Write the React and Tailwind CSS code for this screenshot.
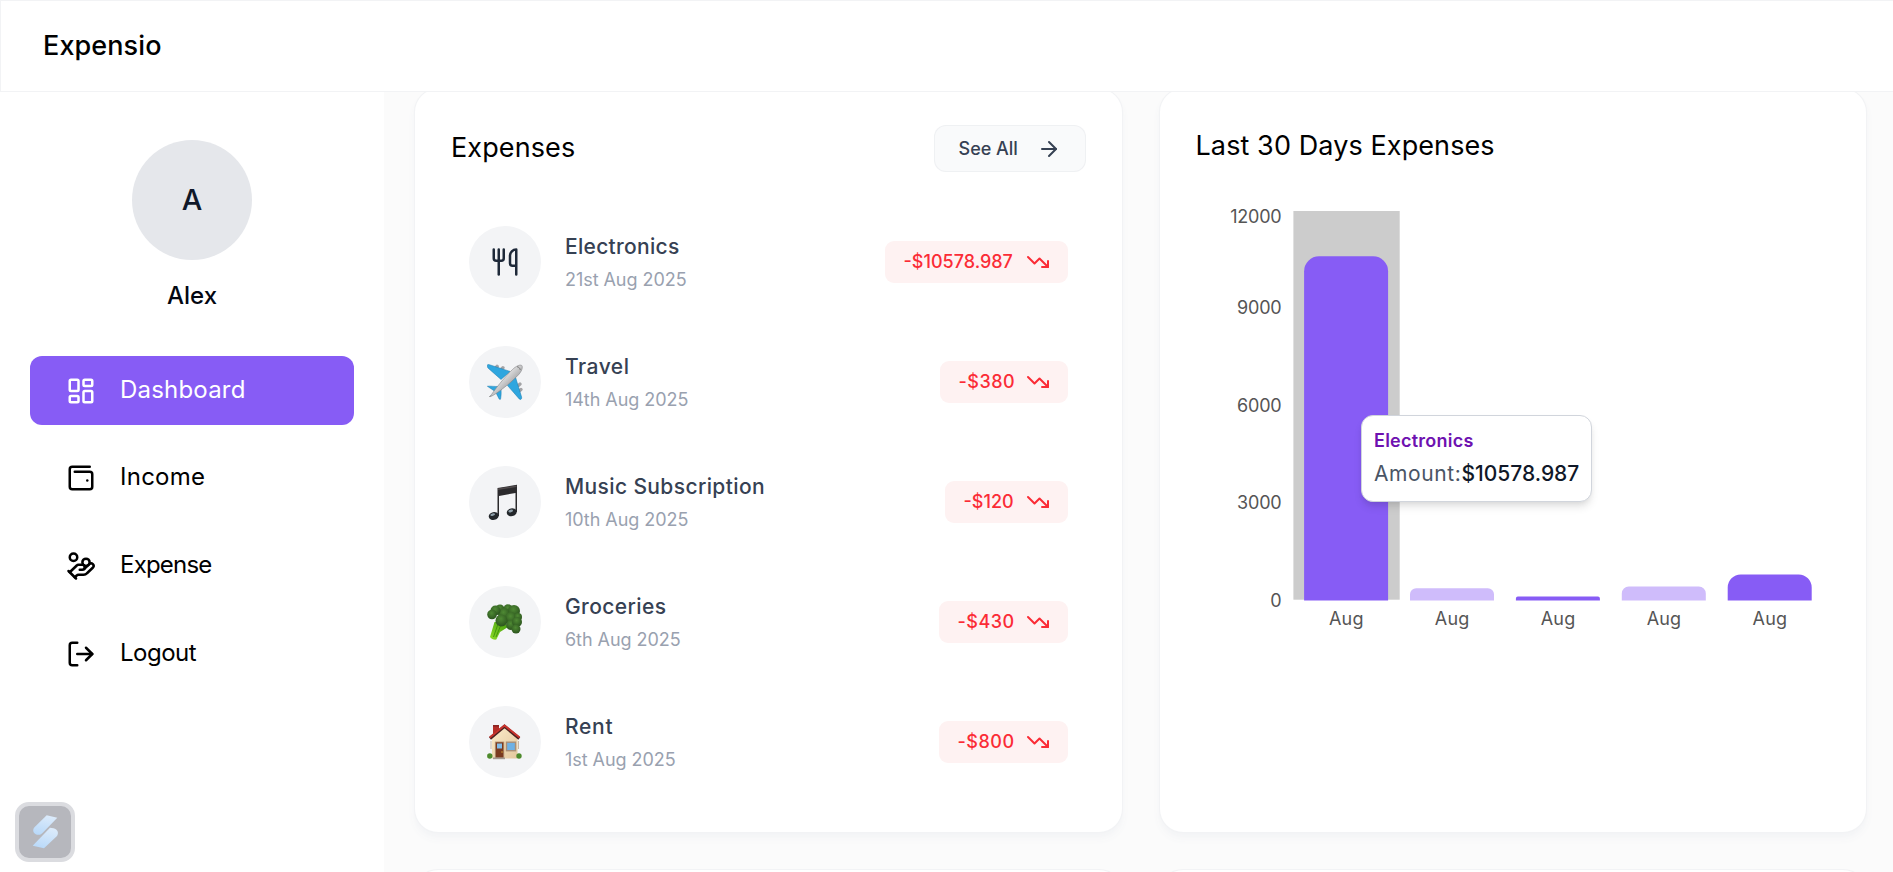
import React from "react";
import {
  LuLayoutDashboard,
  LuWalletMinimal,
  LuHandCoins,
  LuLogOut,
  LuArrowRight,
  LuTrendingDown,
  LuUtensils,
} from "react-icons/lu";

const MENU = [
  { label: "Dashboard", Icon: LuLayoutDashboard, active: true, track: "tracking-[0.2px]" },
  { label: "Income", Icon: LuWalletMinimal, track: "tracking-[0.25px]" },
  { label: "Expense", Icon: LuHandCoins, track: "tracking-[-0.8px]" },
  { label: "Logout", Icon: LuLogOut, track: "tracking-[-0.5px]" },
];

function Plane() {
  return (
    <svg viewBox="0 0 36 36" className="size-9">
      <defs>
        <linearGradient id="hull" x1="0" y1="0" x2="1" y2="1">
          <stop offset="0.3" stopColor="#f4f4f4" />
          <stop offset="0.75" stopColor="#8f8f92" />
        </linearGradient>
      </defs>
      <g fill="#a3a3a6">
        <rect x="8" y="0.8" width="3.6" height="5.5" rx="1.6" transform="rotate(40 10 3)" />
        <rect x="14" y="1.8" width="3.4" height="5.5" rx="1.6" transform="rotate(40 15.5 4)" />
        <rect x="29" y="19" width="5.4" height="3.4" rx="1.6" transform="rotate(-40 32 20)" />
        <rect x="30.5" y="24.5" width="5.2" height="3.4" rx="1.6" transform="rotate(-40 33 26)" />
      </g>
      <g fill="#2ea6df" stroke="#1778ad" strokeWidth="0.5" strokeLinejoin="round">
        <path d="M0.3 1.2C0.5.3 1.5.3 2.4.7L23 7.4 14 15.5 1.2 4.2C.4 3.4.1 2.2.3 1.2Z" />
        <path d="M28.3 12.5L34.6 33c.3 1.2-.3 2.6-1.4 2.4-.8-.1-1.2-.6-1.6-1.2L20.5 21.5Z" />
        <path d="M.4 22.3c2-.5 7 .3 11.6.2L8.5 27.7Z" />
        <path d="M8.6 28L14 24.5c.3 4 .2 7.5-.5 10.8l-1.2-.1Z" />
      </g>
      <path d="M2.5 32.8L3.6 31.5" stroke="#777" strokeWidth="1" />
      <path
        d="M3.2 32.7C6 27.5 19 11.5 25.5 5.5 29 2.2 32.5.5 34.5 1.3c1.6 1 .8 5-2.3 8.700C26.500 16.500 9.500 30.500 3.200 32.700Z"
        fill="url(#hull)"
        stroke="#858588"
        strokeWidth="0.6"
      />
      <path d="M30 2.7c1.8.2 3 1.500 3.300 3.300" fill="none" stroke="#777" strokeWidth="1" />
    </svg>
  );
}

function Note() {
  return (
    <svg viewBox="0 0 36 36" className="size-9">
      <path d="M10.5 4L30 .8V28h-1.500V9L12 12v20h-1.500Z" fill="#2b2a2d" />
      <path d="M11 4.400L29.500 1.400V3L11 6Z" fill="#514a4c" />
      <ellipse cx="6.7" cy="32" rx="5" ry="3.900" fill="#23272b" transform="rotate(-12 6.7 32)" />
      <ellipse cx="24.7" cy="28.3" rx="5" ry="3.900" fill="#23272b" transform="rotate(-12 24.7 28.3)" />
      <ellipse cx="5.7" cy="30.7" rx="2.4" ry="1.2" fill="#8fa0ab" transform="rotate(-15 5.7 30.7)" />
      <ellipse cx="23.7" cy="27" rx="2.4" ry="1.2" fill="#8fa0ab" transform="rotate(-15 23.7 27)" />
    </svg>
  );
}

function Broccoli() {
  return (
    <svg viewBox="0 0 36 36" className="size-9">
      <defs>
        <radialGradient id="floret" cx="0.45" cy="0.35" r="0.65">
          <stop offset="0" stopColor="#4f8a34" />
          <stop offset="1" stopColor="#2b541d" />
        </radialGradient>
        <linearGradient id="stalk" x1="0" y1="1" x2="1" y2="0">
          <stop offset="0" stopColor="#8fdc28" />
          <stop offset="1" stopColor="#3f9a0c" />
        </linearGradient>
      </defs>
      <path d="M7.5 18L3 33c1 1.8 4 3 6.3 2.6L13 28l8-5-6-6Z" fill="url(#stalk)" />
      <path d="M11 20L6.5 33M13.5 22L9 33" stroke="#378a0a" strokeWidth="0.8" />
      <g fill="url(#floret)">
        <circle cx="13" cy="5" r="4.5" />
        <circle cx="21" cy="4.8" r="4.5" />
        <circle cx="17" cy="10" r="6" />
        <circle cx="8.5" cy="6.5" r="5" />
        <circle cx="27" cy="7" r="6" />
        <circle cx="24" cy="14" r="6" />
        <circle cx="31" cy="13" r="4" />
        <circle cx="5" cy="10.5" r="4.8" />
        <circle cx="24" cy="21" r="5" />
        <circle cx="30" cy="18" r="5" />
        <circle cx="29" cy="25" r="4.5" />
        <circle cx="14.5" cy="16.5" r="6" />
      </g>
    </svg>
  );
}

function House() {
  return (
    <svg viewBox="0 0 36 36" className="size-9">
      <defs>
        <linearGradient id="wall" x1="0" y1="0" x2="1" y2="1">
          <stop offset="0" stopColor="#fbeccb" />
          <stop offset="1" stopColor="#e3c79d" />
        </linearGradient>
      </defs>
      <rect x="6" y="1.2" width="6" height="9" fill="#b52d27" />
      <rect x="6" y="1" width="6" height="1.6" fill="#8a2522" />
      <path d="M5 13L17.5 2.5 30.5 13v21.5H5Z" fill="url(#wall)" />
      <path d="M4 17v8M31.5 17v8" stroke="#c9b9a6" strokeWidth="1" />
      <path d="M3 14.5L17.5 2.3 32.3 14.5" fill="none" stroke="#4a2020" strokeWidth="3" />
      <path d="M2.7 13.5L17.5 1.5 32.6 13.5" fill="none" stroke="#c9332d" strokeWidth="2" />
      <rect x="8.3" y="18" width="8.5" height="16" fill="#7a3a1f" stroke="#b08f6f" strokeWidth="0.8" />
      <rect x="10" y="19.5" width="5" height="5" fill="#82bdea" />
      <circle cx="15" cy="28" r="0.7" fill="#e2b33c" />
      <rect x="19.5" y="18.2" width="9" height="8.5" fill="#6fb1e4" stroke="#a98f78" strokeWidth="1.4" />
      <rect x="6" y="33.5" width="12" height="1.7" fill="#a39a90" />
      <circle cx="2.8" cy="32" r="2.7" fill="#4d8a2c" />
      <circle cx="32" cy="32" r="2.7" fill="#4d8a2c" />
    </svg>
  );
}

const EXPENSES = [
  { name: "Electronics", date: "21st Aug 2025", amount: "-$10578.987", width: "w-[183px]", amountTrack: "tracking-normal", nameTrack: "tracking-[0.3px]", icon: <LuUtensils className="size-[30px] text-gray-800" /> },
  { name: "Travel", date: "14th Aug 2025", amount: "-$380", width: "w-32", amountTrack: "tracking-[0.5px]", nameTrack: "tracking-[0.5px]", icon: <Plane /> },
  { name: "Music Subscription", date: "10th Aug 2025", amount: "-$120", width: "w-[123px]", amountTrack: "tracking-normal", nameTrack: "tracking-[0.38px]", icon: <Note /> },
  { name: "Groceries", date: "6th Aug 2025", amount: "-$430", width: "w-[129px]", amountTrack: "tracking-[0.5px]", nameTrack: "tracking-[0.4px]", icon: <Broccoli /> },
  { name: "Rent", date: "1st Aug 2025", amount: "-$800", width: "w-[129px]", amountTrack: "tracking-[0.5px]", nameTrack: "tracking-[0.7px]", icon: <House /> },
];

function ExpenseRow({ item }) {
  return (
    <div className="flex items-center gap-6 p-[18px]">
      <div className="flex size-[72px] items-center justify-center rounded-full bg-gray-100">{item.icon}</div>
      <div className="flex flex-1 items-center justify-between">
        <div className="pt-px">
          <p className={`text-[21px] leading-[33px] font-medium text-gray-700 ${item.nameTrack}`}>{item.name}</p>
          <p className="text-lg leading-[33px] tracking-[-0.05px] text-gray-400">{item.date}</p>
        </div>
        <div className={`flex h-[42px] items-center justify-between rounded-[9px] bg-red-50 pr-[18px] pl-[19px] text-red-500 ${item.width}`}>
          <span className={`text-lg font-medium ${item.amountTrack}`}>{item.amount}</span>
          <LuTrendingDown className="size-6" />
        </div>
      </div>
    </div>
  );
}

const BASE = 410.5;
const UNIT = 0.03254;
const TICKS = [
  [12000, 26.5],
  [9000, 117.7],
  [6000, 215.7],
  [3000, 312.7],
  [0, 410.7],
];

function barPath(x, w, h) {
  const r = Math.min(15, h / 2);
  const top = BASE - h;
  return `M${x} ${BASE}V${top + r}a${r} ${r} 0 0 1 ${r} ${-r}H${x + w - r}a${r} ${r} 0 0 1 ${r} ${r}V${BASE}Z`;
}

function ExpenseChart() {
  return (
    <svg width="634" height="450" viewBox="0 0 634 450" className="mt-[23px] block">
      <rect x="97.4" y="21" width="106.3" height="388.7" fill="#ccc" />
      {[10578.987, 380, 120, 430, 800].map((value, i) => (
        <React.Fragment key={value}>
          <path d={barPath(108.1 + i * 105.9, 84, value * UNIT)} fill={i % 2 ? "#cfbcfb" : "#875cf5"} />
          <text x={150.3 + i * 105.9} y={434.8} textAnchor="middle" fontSize="18" letterSpacing="0.2" fill="#555">
            Aug
          </text>
        </React.Fragment>
      ))}
      {TICKS.map(([value, y]) => (
        <text key={value} x="85.5" y={y + 6} textAnchor="end" fontSize="18" letterSpacing="-0.2" fill="#555">
          {value}
        </text>
      ))}
    </svg>
  );
}

const CARD =
  "rounded-3xl border border-gray-200/50 bg-white p-9 shadow-[0_6px_9px_-1.5px_#f3f4f6,0_3px_6px_-3px_#f3f4f6]";

export default function App() {
  return (
    <div className="relative flex h-[872px] w-full flex-col overflow-hidden bg-[#fbfbfb] font-['Inter',sans-serif] text-black">
      <header className="relative z-10 flex h-[92px] shrink-0 items-center border border-r-0 border-gray-200/50 bg-white px-[42px]">
        <h1 className="text-[27px] leading-9 font-medium tracking-[0.1px]">Expensio</h1>
      </header>

      <div className="flex min-h-0 flex-1">
        <aside className="flex w-96 shrink-0 flex-col bg-white px-[30px] pt-12">
          <div className="flex flex-col items-center">
            <div className="flex size-[120px] items-center justify-center rounded-full bg-gray-200 text-[29px] font-medium text-gray-900">
              A
            </div>
            <p className="mt-[18px] text-2xl leading-9 font-medium text-gray-950">Alex</p>
          </div>
          <nav className="mt-[42px] flex flex-col gap-[18.75px]">
            {MENU.map(({ label, Icon, active, track }) => (
              <div
                key={label}
                className={`flex h-[69px] items-center gap-6 rounded-xl px-9 text-2xl ${track} ${active ? "bg-[#875cf5] text-white" : ""}`}
              >
                <Icon className="size-[30px]" />
                <span className="pb-0.5">{label}</span>
              </div>
            ))}
          </nav>
        </aside>

        <main className="-mt-1 flex-1 pr-[26px] pl-[30px]">
          <div className="grid grid-cols-2 gap-9">
            <section className={`h-[745px] ${CARD}`}>
              <div className="flex items-center justify-between">
                <h2 className="pb-0.5 text-[27px] leading-10 tracking-[0.1px]">Expenses</h2>
                <div className="flex h-[47px] w-[152px] items-center justify-between rounded-xl border border-gray-200/50 bg-gray-50 px-6 text-lg font-medium text-gray-700">
                  See All <LuArrowRight className="size-6" />
                </div>
              </div>
              <div className="mt-9 flex flex-col gap-3">
                {EXPENSES.map((item) => (
                  <ExpenseRow key={item.name} item={item} />
                ))}
              </div>
            </section>

            <section className={`relative h-[745px] ${CARD}`}>
              <h2 className="text-[27px] leading-[42px] tracking-[0.1px]">Last 30 Days Expenses</h2>
              <ExpenseChart />
              <div className="absolute top-[326px] left-[201.5px] h-[87px] w-[231px] rounded-xl border border-gray-300 bg-white px-3 pt-[9px] shadow-[0_6px_9px_-1.5px_rgba(0,0,0,0.1),0_3px_6px_-3px_rgba(0,0,0,0.1)]">
                <p className="text-lg leading-8 font-semibold tracking-[0.25px] text-purple-800">Electronics</p>
                <p className="text-[21px] leading-[33px] whitespace-nowrap">
                  <span className="tracking-[0.6px] text-gray-600">Amount:</span>
                  <span className="font-medium text-gray-900">$10578.987</span>
                </p>
              </div>
            </section>

            <section className={`h-40 ${CARD}`} />
            <section className={`h-40 ${CARD}`} />
          </div>
        </main>
      </div>

      <div className="absolute bottom-2.5 left-[15px] z-20 size-[60px] rounded-[14px] border-4 border-[#dbdce0] bg-[#b6b7bd]">
        <svg viewBox="4 4 52 52" className="size-[52px]">
          <defs>
            <linearGradient id="ribbon" x1="0.6" y1="0" x2="0.3" y2="1">
              <stop offset="0" stopColor="#dcebfb" />
              <stop offset="1" stopColor="#b9d9f9" />
            </linearGradient>
          </defs>
          <path d="M31.7 13.3L42.3 15.7 27.5 31c-1.5 1.6-3.5 2.2-5.5 1.7-3.6-.9-5-4.8-2.5-7.5Z" fill="url(#ribbon)" />
          <path d="M35 25.7l3.5.6c4.3.9 5.8 5 3 8.2L29 46.3l-11.3-2.6Z" fill="url(#ribbon)" />
        </svg>
      </div>
    </div>
  );
}
